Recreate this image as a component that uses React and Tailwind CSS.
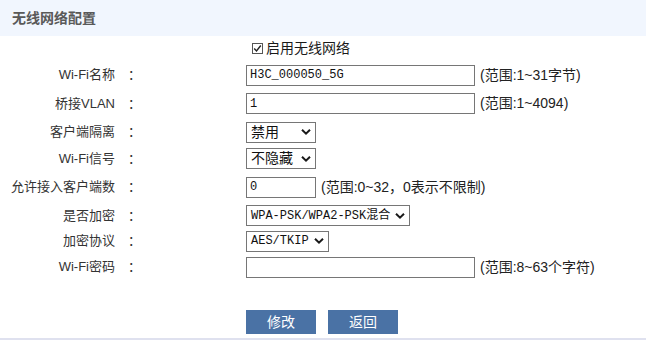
import { useState } from "react";

const sans = "font-['Liberation_Sans','Noto_Sans_CJK_SC',sans-serif]";
const mono = "font-['Liberation_Mono','Noto_Sans_CJK_SC',monospace]";

function Chevron() {
  return (
    <svg className="pointer-events-none absolute right-[5px] top-1/2 -translate-y-1/2" width="10" height="7" viewBox="0 0 10 7">
      <path d="M1 1.2 L5 5.2 L9 1.2" fill="none" stroke="#1a1a1a" strokeWidth="2" />
    </svg>
  );
}

function Select({ value, width, font }) {
  return (
    <div className={`relative h-[21px] ${width}`}>
      <div className={`flex h-full items-center border border-[#767676] bg-white pl-[4px] text-[#111] ${font}`}>
        {value}
      </div>
      <Chevron />
    </div>
  );
}

function Row({ label, h, children }) {
  return (
    <div className={`flex items-center ${h}`}>
      <div className="flex w-[138px] justify-end text-[13px] text-[#333]">
        <span>{label}</span>
        <span className="ml-[13px] inline-block w-[10px]">：</span>
      </div>
      <div className="ml-[108px] flex items-center">{children}</div>
    </div>
  );
}

export default function App() {
  const [enabled, setEnabled] = useState(true);

  return (
    <div className={`h-[340px] w-[646px] overflow-hidden bg-white ${sans}`}>
      <div className="flex h-[36px] items-center bg-[#f1f6fe] pl-[12px] text-[14px] font-bold text-[#595959]">
        无线网络配置
      </div>

      <div className="flex h-[25px] items-center pl-[252px]">
        <button
          onClick={() => setEnabled(!enabled)}
          className="flex h-[11px] w-[11px] items-center justify-center border border-[#555] bg-white"
        >
          {enabled && (
            <svg width="9" height="9" viewBox="0 0 9 9">
              <path d="M1.2 4.5 L3.5 7 L7.8 1.5" fill="none" stroke="#222" strokeWidth="1.4" />
            </svg>
          )}
        </button>
        <span className="ml-[3px] text-[14px] text-[#1a1a1a]">启用无线网络</span>
      </div>

      <Row label="Wi-Fi名称" h="h-[28px]">
        <div className={`flex h-[21px] w-[229px] items-center border border-[#767676] pl-[3px] text-[12px] text-[#111] ${mono}`}>
          H3C_000050_5G
        </div>
        <span className="ml-[5px] text-[14px] text-[#222]">(范围:1~31字节)</span>
      </Row>

      <Row label="桥接VLAN" h="h-[29px]">
        <div className={`flex h-[21px] w-[229px] items-center border border-[#767676] pl-[3px] text-[12px] text-[#111] ${mono}`}>
          1
        </div>
        <span className="ml-[5px] text-[14px] text-[#222]">(范围:1~4094)</span>
      </Row>

      <Row label="客户端隔离" h="h-[28px]">
        <Select value="禁用" width="w-[70px]" font="text-[14px]" />
      </Row>

      <Row label="Wi-Fi信号" h="h-[25px]">
        <Select value="不隐藏" width="w-[70px]" font="text-[14px]" />
      </Row>

      <Row label="允许接入客户端数" h="h-[32px]">
        <div className={`flex h-[21px] w-[70px] items-center border border-[#767676] pl-[3px] text-[12px] text-[#111] ${mono}`}>
          0
        </div>
        <span className="ml-[5px] text-[14px] text-[#222]">(范围:0~32，0表示不限制)</span>
      </Row>

      <Row label="是否加密" h="h-[25px]">
        <Select value="WPA-PSK/WPA2-PSK混合" width="w-[164px]" font={`${mono} text-[12px]`} />
      </Row>

      <Row label="加密协议" h="h-[26px]">
        <Select value="AES/TKIP" width="w-[83px]" font={`${mono} text-[12px]`} />
      </Row>

      <Row label="Wi-Fi密码" h="h-[26px]">
        <div className="h-[21px] w-[229px] border border-[#767676]" />
        <span className="ml-[5px] text-[14px] text-[#222]">(范围:8~63个字符)</span>
      </Row>

      <div className="flex h-[54px] items-end gap-[12px] pl-[246px]">
        <button className="h-[24px] w-[70px] bg-[#4a72a5] text-[14px] text-white">修改</button>
        <button className="h-[24px] w-[70px] bg-[#4a72a5] text-[14px] text-white">返回</button>
      </div>
      <div className="mt-[4px] h-[2px] bg-[#dfe1ef]" />
    </div>
  );
}
